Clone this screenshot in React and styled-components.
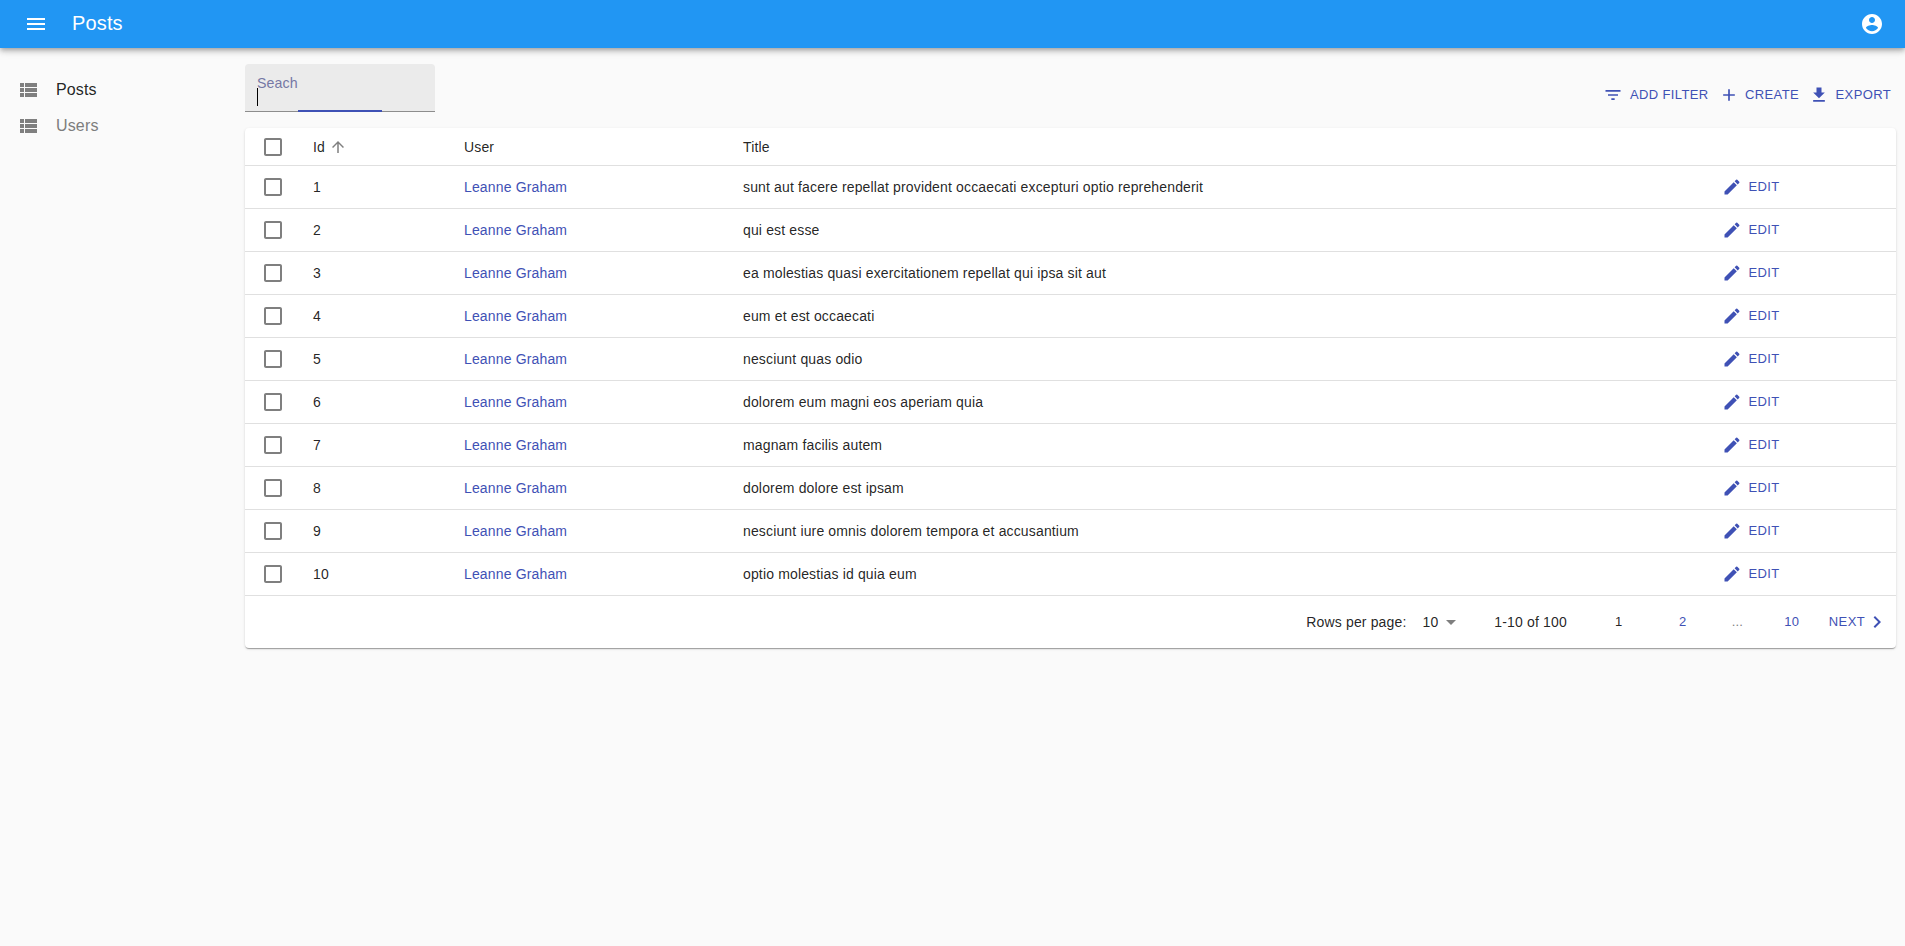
import React from "react";

// style
import styled, { createGlobalStyle } from "styled-components";

const posts = [
  "sunt aut facere repellat provident occaecati excepturi optio reprehenderit",
  "qui est esse",
  "ea molestias quasi exercitationem repellat qui ipsa sit aut",
  "eum et est occaecati",
  "nesciunt quas odio",
  "dolorem eum magni eos aperiam quia",
  "magnam facilis autem",
  "dolorem dolore est ipsam",
  "nesciunt iure omnis dolorem tempora et accusantium",
  "optio molestias id quia eum",
].map((title, i) => ({ id: i + 1, user: "Leanne Graham", title }));

// icons
const paths = {
  menu: "M3 18h18v-2H3v2zm0-5h18v-2H3v2zm0-7v2h18V6H3z",
  account:
    "M12 2C6.48 2 2 6.48 2 12s4.48 10 10 10 10-4.48 10-10S17.52 2 12 2zm0 3c1.66 0 3 1.34 3 3s-1.34 3-3 3-3-1.34-3-3 1.34-3 3-3zm0 14.2c-2.5 0-4.71-1.28-6-3.22.03-1.99 4-3.08 6-3.08 1.99 0 5.97 1.09 6 3.08-1.29 1.94-3.5 3.22-6 3.22z",
  list: "M4 14h4v-4H4v4zm0 5h4v-4H4v4zM4 9h4V5H4v4zm5 5h12v-4H9v4zm0 5h12v-4H9v4zM9 5v4h12V5H9z",
  filter: "M10 18h4v-2h-4v2zM3 6v2h18V6H3zm3 7h12v-2H6v2z",
  add: "M19 13h-6v6h-2v-6H5v-2h6V5h2v6h6v2z",
  download: "M19 9h-4V3H9v6H5l7 7 7-7zM5 18v2h14v-2H5z",
  edit: "M3 17.25V21h3.75L17.81 9.94l-3.75-3.75L3 17.25zM20.71 7.04c.39-.39.39-1.02 0-1.41l-2.34-2.34a.9959.9959 0 0 0-1.41 0l-1.83 1.83 3.75 3.75 1.83-1.83z",
  box: "M19 5v14H5V5h14m0-2H5c-1.1 0-2 .9-2 2v14c0 1.1.9 2 2 2h14c1.1 0 2-.9 2-2V5c0-1.1-.9-2-2-2z",
  up: "M4 12l1.41 1.41L11 7.83V20h2V7.83l5.58 5.59L20 12l-8-8-8 8z",
  drop: "M7 10l5 5 5-5z",
  right: "M10 6L8.59 7.41 13.17 12l-4.58 4.59L10 18l6-6z",
};

const Icon = ({ name, size = 24 }) => (
  <Svg viewBox="0 0 24 24" $size={size}>
    <path d={paths[name]} />
  </Svg>
);

const App = () => {
  return (
    <>
      <GlobalStyle />
      <AppBar>
        <Icon name="menu" />
        <h6>Posts</h6>
        <Icon name="account" />
      </AppBar>
      <Main>
        <Sidebar>
          <MenuItem $active>
            <Icon name="list" />
            Posts
          </MenuItem>
          <MenuItem>
            <Icon name="list" />
            Users
          </MenuItem>
        </Sidebar>
        <Content>
          <Toolbar>
            <Search>
              <Label>Seach</Label>
              <Caret />
              <Underline />
            </Search>
            <Actions>
              <Button>
                <Icon name="filter" size={20} />
                <span>Add filter</span>
              </Button>
              <Button>
                <Icon name="add" size={20} />
                <span>Create</span>
              </Button>
              <Button>
                <Icon name="download" size={20} />
                <span>Export</span>
              </Button>
            </Actions>
          </Toolbar>
          <Card>
            <Row $head>
              <Check>
                <Icon name="box" />
              </Check>
              <Sort>
                Id
                <Icon name="up" size={18} />
              </Sort>
              <span>User</span>
              <span>Title</span>
            </Row>
            {posts.map((post) => (
              <Row key={post.id}>
                <Check>
                  <Icon name="box" />
                </Check>
                <span>{post.id}</span>
                <UserLink>{post.user}</UserLink>
                <span>{post.title}</span>
                <Button>
                  <Icon name="edit" size={20} />
                  <span>Edit</span>
                </Button>
              </Row>
            ))}
            <Pagination>
              <span>Rows per page:</span>
              <Select>
                10
                <Icon name="drop" />
              </Select>
              <Range>1-10 of 100</Range>
              <Page $current>1</Page>
              <Page>2</Page>
              <Dots>...</Dots>
              <Page>10</Page>
              <Next>
                <span>Next</span>
                <Icon name="right" />
              </Next>
            </Pagination>
          </Card>
        </Content>
      </Main>
    </>
  );
};

const GlobalStyle = createGlobalStyle`
  * {
    box-sizing: border-box;
  }
  body {
    margin: 0;
    min-height: 100vh;
    background: #fafafa;
    color: rgba(0, 0, 0, 0.87);
    font-family: "Liberation Sans", Helvetica, Arial, sans-serif;
    font-size: 14px;
    letter-spacing: 0.01071em;
  }
`;

const Svg = styled.svg`
  width: ${({ $size }) => $size}px;
  height: ${({ $size }) => $size}px;
  fill: currentColor;
  flex-shrink: 0;
`;

const AppBar = styled.header`
  position: relative;
  display: flex;
  align-items: center;
  height: 48px;
  padding: 0 21px 0 24px;
  background: #2196f3;
  color: white;
  box-shadow: 0 2px 4px -1px rgba(0, 0, 0, 0.2),
    0 4px 5px 0 rgba(0, 0, 0, 0.14), 0 1px 10px 0 rgba(0, 0, 0, 0.12);
  h6 {
    flex: 1;
    margin: 0;
    padding: 0 0 2px 24px;
    font-size: 20px;
    line-height: 32px;
    font-weight: 400;
    letter-spacing: 0.0075em;
  }
`;

const Main = styled.div`
  display: flex;
`;

const Sidebar = styled.nav`
  width: 245px;
  padding-top: 24px;
`;

const MenuItem = styled.div`
  display: flex;
  align-items: center;
  gap: 16px;
  height: 36px;
  padding-left: 16px;
  font-size: 16px;
  letter-spacing: 0.00938em;
  color: ${({ $active }) => ($active ? "rgba(0, 0, 0, 0.87)" : "#7d7d7d")};
  svg {
    color: #7f7f7f;
  }
`;

const Content = styled.main`
  flex: 1;
  padding: 16px 9px 0 0;
`;

const Toolbar = styled.div`
  display: flex;
  justify-content: space-between;
  height: 64px;
`;

const Search = styled.div`
  position: relative;
  width: 190px;
  height: 48px;
  padding: 11px 12px 0;
  background: #ebebeb;
  border-bottom: 1px solid #8d8d8d;
  border-radius: 4px 4px 0 0;
`;

const Label = styled.div`
  height: 13px;
  font-size: 14.2px;
  line-height: 17px;
  letter-spacing: 0.1px;
  color: #7678a5;
`;

const Caret = styled.div`
  width: 1px;
  height: 18px;
  background: black;
`;

/* focus line, part way through growing from the centre */
const Underline = styled.div`
  position: absolute;
  left: 53px;
  bottom: -1px;
  width: 84px;
  height: 2px;
  background: #3f51b5;
`;

const Actions = styled.div`
  display: flex;
  align-items: flex-start;
  padding-top: 16px;
`;

const Button = styled.div`
  display: flex;
  align-items: center;
  gap: 6.5px;
  height: 30px;
  padding: 0 5px;
  font-size: 13px;
  letter-spacing: 0.02857em;
  text-transform: uppercase;
  color: #3f51b5;
  span {
    padding-bottom: 2px;
  }
`;

const Card = styled.section`
  background: white;
  border-radius: 4px;
  box-shadow: 0 2px 1px -1px rgba(0, 0, 0, 0.2),
    0 1px 1px 0 rgba(0, 0, 0, 0.14), 0 1px 3px 0 rgba(0, 0, 0, 0.12);
`;

const Row = styled.div`
  display: grid;
  grid-template-columns: 68px 151px 279px 974px auto;
  justify-content: start;
  align-items: center;
  height: ${({ $head }) => ($head ? 38 : 43)}px;
  border-bottom: 1px solid #e0e0e0;
`;

const Check = styled.div`
  display: flex;
  padding-left: 16px;
  color: #7f7f7f;
`;

const Sort = styled.div`
  display: flex;
  align-items: center;
  gap: 4px;
  svg {
    color: #808080;
  }
`;

const UserLink = styled.span`
  color: #3f51b5;
`;

const Pagination = styled.div`
  display: flex;
  align-items: center;
  justify-content: flex-end;
  height: 52px;
  padding-right: 7px;
`;

const Select = styled.div`
  display: flex;
  align-items: center;
  margin: 0 31px 0 16px;
  svg {
    margin-left: 1px;
    color: #7f7f7f;
  }
`;

const Range = styled.span`
  margin-right: 20px;
`;

const Page = styled.div`
  width: 64px;
  padding-bottom: 2px;
  text-align: center;
  font-size: 13px;
  letter-spacing: 0.02857em;
  color: ${({ $current }) => ($current ? "rgba(0, 0, 0, 0.87)" : "#3f51b5")};
`;

const Dots = styled.span`
  width: 45px;
  padding-bottom: 2px;
  text-align: center;
  font-size: 13px;
  color: #7f7f7f;
`;

const Next = styled.div`
  display: flex;
  align-items: center;
  margin-left: 5px;
  font-size: 13px;
  letter-spacing: 0.02857em;
  text-transform: uppercase;
  color: #3f51b5;
  span {
    padding-bottom: 2px;
  }
`;

export default App;
